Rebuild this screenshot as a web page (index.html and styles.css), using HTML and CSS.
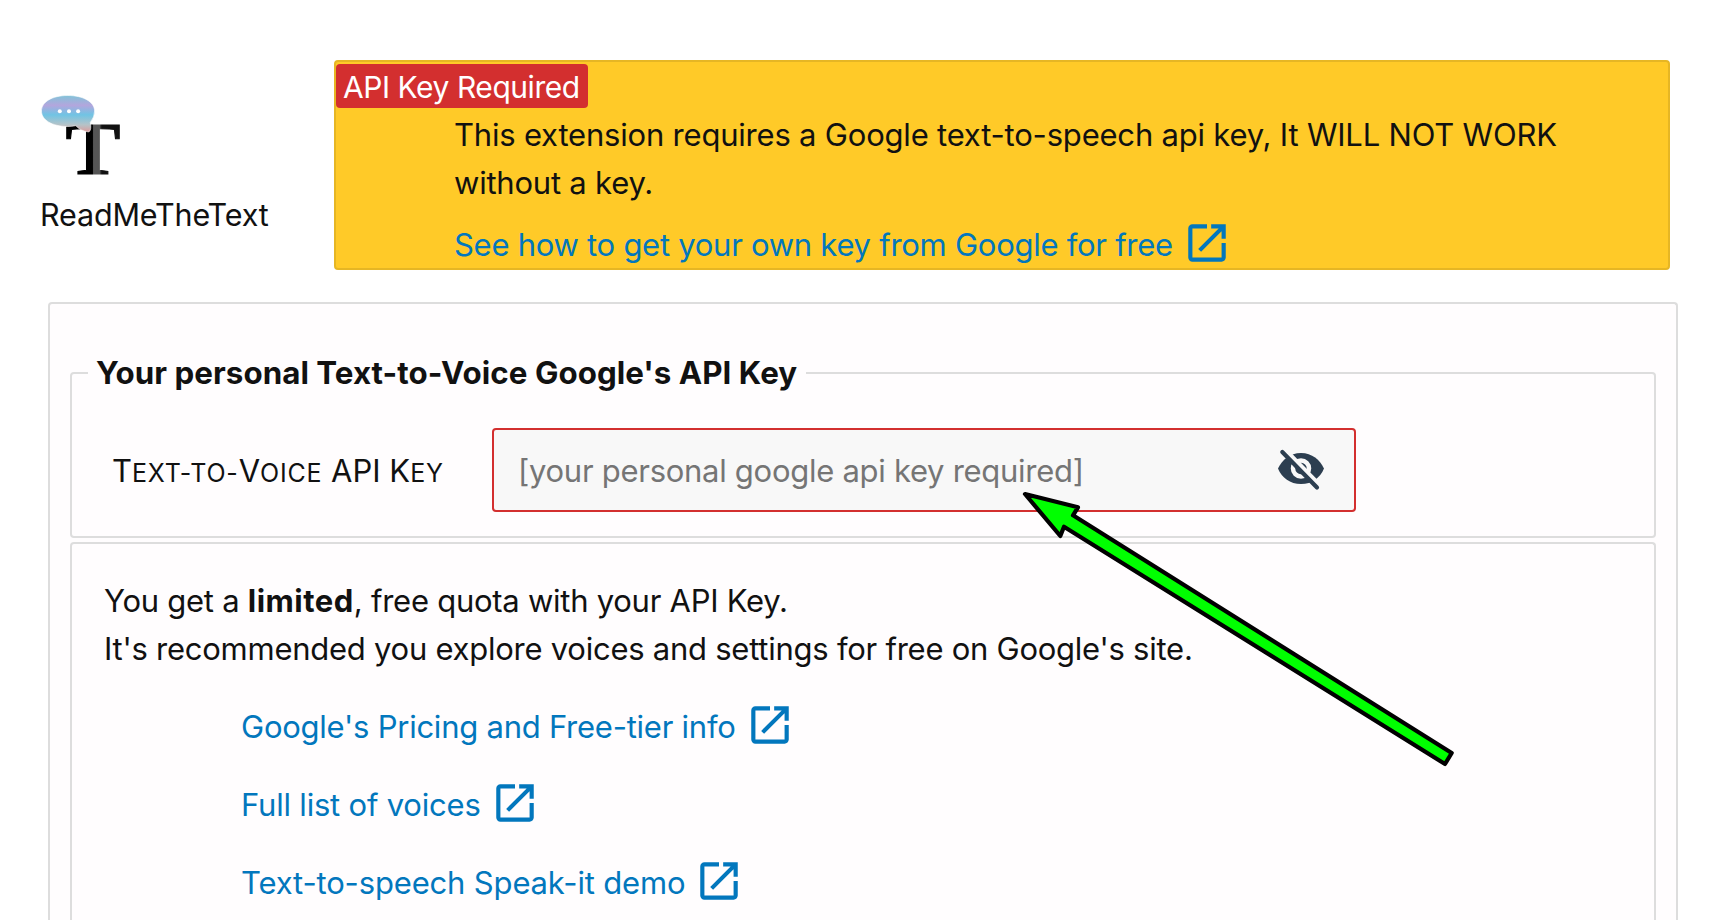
FILE: index.html
```
<!DOCTYPE html>
<html lang="en">
<head>
<meta charset="utf-8">
<title>ReadMeTheText</title>
<link rel="stylesheet" href="styles.css">
</head>
<body>
<svg class="sprite" aria-hidden="true">
  <symbol id="open" viewBox="0 0 24 24"><path d="M19 19H5V5h7V3H5a2 2 0 0 0-2 2v14a2 2 0 0 0 2 2h14c1.100 0 2-.9 2-2v-7h-2v7zM14 3v2h3.590l-9.830 9.830 1.410 1.410L19 6.410V10h2V3h-7z"/></symbol>
</svg>
<header class="top">
  <div class="brand">
    <svg class="logo" viewBox="0 0 84 84">
      <defs>
        <linearGradient id="bubble" x1="0" y1="0" x2="0" y2="1">
          <stop offset="0" stop-color="#82c3d8"/><stop offset=".27" stop-color="#b3a6dd"/>
          <stop offset=".53" stop-color="#70c4e4"/><stop offset=".8" stop-color="#b5c3c8"/><stop offset="1" stop-color="#dc9c9c"/>
        </linearGradient>
        <linearGradient id="ink" x1="0" x2="1" y1="0" y2="0">
          <stop offset=".49" stop-color="#000"/><stop offset=".51" stop-color="#555"/>
          <stop offset=".62" stop-color="#555"/><stop offset=".66" stop-color="#111"/>
        </linearGradient>
      </defs>
      <text class="logo-t" x="25.500" y="78.500" textLength="55" lengthAdjust="spacingAndGlyphs" fill="url(#ink)" stroke="url(#ink)" stroke-width="1">T</text>
      <path d="M27.800 .5C12 .5 1.500 7 1.500 16s10.500 15.500 26.300 15.500q4 0 8-.8 5 5.500 13 6.300 3-2 1.500-9.500Q54.600 22 54.600 16C54.600 7 43.500 .5 27.800 .5z" fill="url(#bubble)" stroke="#fff" stroke-width=".6"/>
      <g fill="#fff"><circle cx="19.800" cy="16.200" r="2"/><circle cx="29" cy="16.200" r="2"/><circle cx="38.100" cy="16.200" r="2"/></g>
    </svg>
    <div class="name">ReadMeTheText</div>
  </div>
  <section class="banner">
    <div class="badge">API Key Required</div>
    <div class="message">
      <div class="m1">This extension requires a Google text-to-speech api key, It WILL NOT WORK</div>
      <div class="m2">without a key.</div>
      <a class="link how"><span>See how to get your own key from Google for free</span><svg class="ext"><use href="#open"/></svg></a>
    </div>
  </section>
</header>
<main class="card">
  <fieldset class="key">
    <legend>Your personal Text-to-Voice Google's API Key</legend>
    <div class="row">
      <label class="label" for="k">T<span class="sc">ext-to-</span>V<span class="sc">oice</span> API K<span class="sc">ey</span></label>
      <div class="field">
        <input id="k" type="text" placeholder="[your personal google api key required]">
        <svg class="eye" viewBox="0 0 46 40">
          <path fill="#2c3e50" d="M23 3C12 3 4 10 0 18.500 4 28 12 34 23 34s19-6 23-15.500C42 10 34 3 23 3z"/>
          <circle cx="23" cy="18.500" r="8" fill="#2c3e50" stroke="#f8f8f8" stroke-width="4.500"/>
          <path d="M6.500-.5 43 37" stroke="#f8f8f8" stroke-width="5"/>
          <path d="M4.300 2 39 37.500" stroke="#2c3e50" stroke-width="4.200" stroke-linecap="round"/>
        </svg>
      </div>
    </div>
  </fieldset>
  <section class="info">
    <p><span class="p1">You get a <b>limited</b>, free quota with your API Key.</span><br><span class="p2">It's recommended you explore voices and settings for free on Google's site.</span></p>
    <nav class="links">
      <a class="link l1"><span>Google's Pricing and Free-tier info</span><svg class="ext"><use href="#open"/></svg></a>
      <a class="link l2"><span>Full list of voices</span><svg class="ext"><use href="#open"/></svg></a>
      <a class="link l3"><span>Text-to-speech Speak-it demo</span><svg class="ext"><use href="#open"/></svg></a>
    </nav>
  </section>
</main>
<svg class="pointer" viewBox="0 0 440 280"><path d="M5 4 58 17.300 53 25.300 431.700 263 425 274 44 36.700 40.300 46z"/></svg>
</body>
</html>
```
FILE: styles.css
```
* { box-sizing: border-box; }
body { margin: 0; height: 920px; display: flex; flex-direction: column; position: relative; background: #fff; color: #111; font: 31px/48px Inter, sans-serif; }
.sprite { position: absolute; width: 0; height: 0; }
.top { display: flex; flex: none; padding: 60px 56px 0 40px; }
.brand { width: 294px; padding-top: 35px; }
.logo { display: block; width: 84px; height: 84px; overflow: visible; }
.logo-t { font: bold 73px "Liberation Serif", serif; }
.name { margin-top: 12px; white-space: nowrap; font-size: 30.5px; letter-spacing: -.17px; }
.banner { width: 1336px; height: 210px; background: #ffca28; border: 2px solid #e6b624; border-radius: 4px; padding-top: 2px; }
.badge { width: 252px; height: 44px; line-height: 46px; padding-left: 7px; background: #d32f2f; color: #fff; border-radius: 4px; white-space: nowrap; font-size: 30px; letter-spacing: -.45px; }
.message { padding: 3px 0 0 118px; white-space: nowrap; }
.m1 { letter-spacing: -.2px; }
.m2 { letter-spacing: -.22px; }
.link { display: flex; align-items: center; height: 50px; gap: 9px; color: #0277bd; white-space: nowrap; letter-spacing: -.2px; }
.ext { width: 50px; height: 50px; fill: currentColor; flex: none; margin-top: -4px; }
.how { margin-top: 13px; gap: 9px; letter-spacing: -.27px; }
.card { flex: 1; min-height: 0; display: flex; flex-direction: column; margin: 32px 48px 0; border: 2px solid #ddd; border-bottom: 0; border-radius: 4px 4px 0 0; background: #fffdfe; padding: 45px 20px 0; }
.key { flex: none; margin: 0; height: 189px; border: 2px solid #ddd; border-radius: 4px; padding: 0 0 0 16px; min-width: 0; }
.key legend { padding: 0 9px 0 8px; font-weight: 700; font-size: 31.300px; line-height: 48px; height: 48px; letter-spacing: .05px; }
.row { display: flex; align-items: center; padding: 31px 0 0 24px; }
.label { width: 380px; padding-top: 4px; white-space: nowrap; }
.sc { font-size: 25px; text-transform: uppercase; letter-spacing: .8px; }
.field { width: 864px; height: 84px; border: 2px solid #d32f2f; border-radius: 4px; background: #f8f8f8; display: flex; align-items: center; padding: 0 30px 0 24px; }
.field input { flex: 1; min-width: 0; height: 60px; border: 0; padding: 0; background: none; font: inherit; letter-spacing: -.28px; }
.field input::placeholder { color: #757575; opacity: 1; }
.eye { width: 46px; height: 40px; overflow: visible; }
.info { flex: 1; min-height: 0; margin-top: 4px; border: 2px solid #ddd; border-bottom: 0; border-radius: 4px 4px 0 0; padding: 33px 0 0 32px; }
.info p { margin: 0; white-space: nowrap; }
.p1 { letter-spacing: -.26px; }
.p1 b { letter-spacing: .5px; }
.p2 { letter-spacing: -.25px; }
.links { display: grid; gap: 28px; padding: 29px 0 0 137px; }
.l1 { letter-spacing: -.24px; }
.l3 { letter-spacing: -.16px; }
.pointer { position: absolute; left: 1020px; top: 490px; width: 440px; height: 280px; fill: #0f0; stroke: #000; stroke-width: 4.200; stroke-linejoin: round; }
```
